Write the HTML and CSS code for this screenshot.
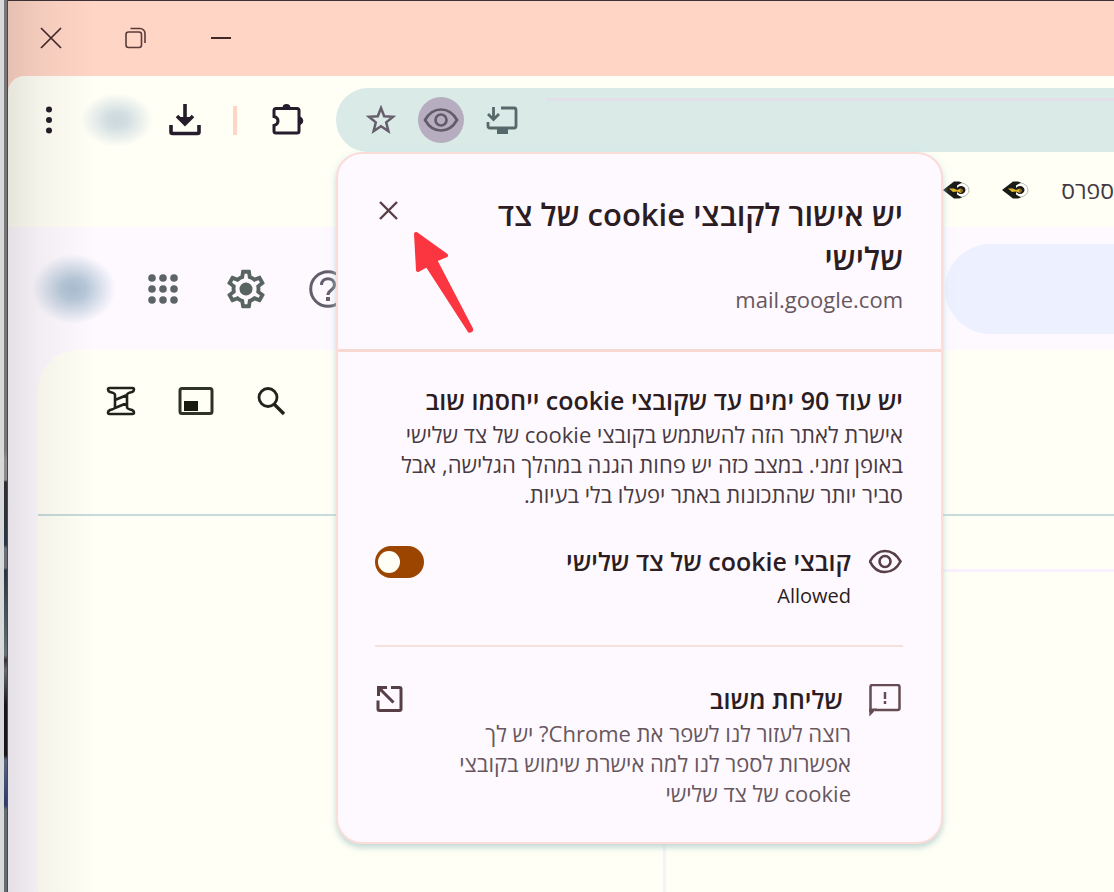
FILE: index.html
```html
<!DOCTYPE html>
<html lang="he">
<head>
<meta charset="utf-8">
<title>mail.google.com</title>
<link rel="stylesheet" href="styles.css">
</head>
<body>
<div class="desktop"></div>
<div class="window">
  <header class="titlebar">
    <button class="icon-btn" aria-label="Close window"><svg width="22" height="22" viewBox="0 0 22 22" fill="none" stroke="#43282a" stroke-width="1.7"><path d="M1 1l20 20M21 1L1 21"/></svg></button>
    <button class="icon-btn" aria-label="Restore window"><svg width="22" height="22" viewBox="0 0 22 22" fill="none" stroke="#5b3a3a" stroke-width="1.6"><rect x="1" y="5" width="15.500" height="15.500" rx="2.500"/><path d="M5.500 1.500h9.500a5 5 0 0 1 5 5V16" /></svg></button>
    <button class="icon-btn" aria-label="Minimize window"><svg width="22" height="22" viewBox="0 0 22 22" stroke="#43282a" stroke-width="2"><path d="M1 11h20"/></svg></button>
  </header>

  <div class="chrome">
    <div class="toolbar">
      <button class="icon-btn menu" aria-label="Menu"><svg width="8" height="30" viewBox="0 0 8 30" fill="#251d2c"><circle cx="4" cy="4.500" r="3"/><circle cx="4" cy="15" r="3"/><circle cx="4" cy="25.500" r="3"/></svg></button>
      <span class="blob-small"></span>
      <button class="icon-btn download" aria-label="Downloads"><svg width="32" height="32" viewBox="0 0 32 32" fill="none" stroke="#251d2c" stroke-width="3.600"><path d="M16 0v19M8 12l8 8 8-8"/><path d="M2 21v7q0 1.500 1.500 1.500h25q1.500 0 1.500-1.500v-7"/><path d="M9 13h14l-7 8z" fill="#251d2c" stroke="none"/></svg></button>
      <span class="separator"></span>
      <button class="icon-btn extensions" aria-label="Extensions"><svg width="32" height="32" viewBox="0 0 32 32"><path d="M4 4.500h21q2 0 2 2V27q0 2-2 2H4q-2 0-2-2v-5.500q4-1 4-4.500t-4-4.500v-6q0-2 2-2z" fill="none" stroke="#251d2c" stroke-width="3"/><path d="M10.500 4a4 4 0 0 1 8 0zM27 12.500a4 4 0 0 1 0 8.500z" fill="#251d2c"/></svg></button>
      <div class="address">
        <button class="icon-btn" aria-label="Bookmark"><svg width="30" height="30" viewBox="0 0 30 30" fill="none" stroke="#665f6b" stroke-width="2.500"><path d="M15 3l3.200 8.300 8.800.5-6.800 5.600 2.200 8.700L15 21.300l-7.400 4.800 2.200-8.700L3 11.800l8.800-.5z"/></svg></button>
        <button class="icon-btn eye-on" aria-label="Third-party cookies"><svg width="36" height="26" viewBox="0 0 36 26" fill="none" stroke="#625c69" stroke-width="2.700"><path d="M2 13Q8 2.500 18 2.500T34 13Q28 23.500 18 23.500T2 13z"/><circle cx="18" cy="13" r="5.500"/></svg></button>
        <button class="icon-btn" aria-label="Install"><svg width="32" height="30" viewBox="0 0 32 30" fill="none" stroke="#56686a" stroke-width="2.800"><path d="M15 3h13q2 0 2 2v16q0 2-2 2H4q-2 0-2-2v-4M7.500 2v12M2 9l5.500 5.500L13 9"/><path d="M11 26.500h11" stroke-width="5"/></svg></button>
        <input class="url" aria-label="Address">
      </div>
    </div>
    <nav class="bookmarks">
      <a href="#" aria-label="Bookmark"><svg width="28" height="20" viewBox="0 0 28 20"><ellipse cx="18" cy="10" rx="8" ry="7" fill="#fff" stroke="#b8bcb2"/><path d="M0 10L11 1.500h5l3 1-5 3v9l5 3-3 1h-5z" fill="#181b17"/><ellipse cx="18" cy="10" rx="4.500" ry="4" fill="#1d1a14"/><path d="M6 8.500h5l3 1.500 4-1.500 2 2-2 2.500-4-1.500-4 .5z" fill="#e3b62c"/><circle cx="18.500" cy="10.500" r="1.500" fill="#7d6a35"/></svg></a>
      <a href="#" aria-label="Bookmark"><svg width="28" height="20" viewBox="0 0 28 20"><ellipse cx="18" cy="10" rx="8" ry="7" fill="#fff" stroke="#b8bcb2"/><path d="M0 10L11 1.500h5l3 1-5 3v9l5 3-3 1h-5z" fill="#181b17"/><ellipse cx="18" cy="10" rx="4.500" ry="4" fill="#1d1a14"/><path d="M6 8.500h5l3 1.500 4-1.500 2 2-2 2.500-4-1.500-4 .5z" fill="#e3b62c"/><circle cx="18.500" cy="10.500" r="1.500" fill="#7d6a35"/></svg></a>
      <a href="#" class="bm-text" dir="rtl">ספרס</a>
    </nav>
  </div>

  <div class="mail-head">
    <span class="blob-large"></span>
    <button class="icon-btn" aria-label="Apps"><svg width="32" height="32" viewBox="0 0 32 32" fill="#5d6468"><circle cx="5" cy="5" r="3.800"/><circle cx="16" cy="5" r="3.800"/><circle cx="27" cy="5" r="3.800"/><circle cx="5" cy="16" r="3.800"/><circle cx="16" cy="16" r="3.800"/><circle cx="27" cy="16" r="3.800"/><circle cx="5" cy="27" r="3.800"/><circle cx="16" cy="27" r="3.800"/><circle cx="27" cy="27" r="3.800"/></svg></button>
    <button class="icon-btn gear" aria-label="Settings"><svg width="46" height="46" viewBox="0 0 24 24" fill="#58645f"><path d="M19.430 12.980c.04-.32.070-.64.070-.98s-.03-.66-.07-.98l2.110-1.650c.19-.15.24-.42.12-.64l-2-3.460c-.12-.22-.39-.3-.61-.22l-2.490 1c-.52-.4-1.080-.73-1.690-.98l-.38-2.650C14.460 2.180 14.250 2 14 2h-4c-.25 0-.46.18-.49.42l-.38 2.650c-.61.25-1.170.59-1.690.98l-2.490-1c-.23-.09-.49 0-.61.22l-2 3.460c-.13.22-.07.49.12.64l2.110 1.650c-.04.32-.07.65-.07.98s.03.66.07.98l-2.110 1.650c-.19.15-.24.42-.12.64l2 3.460c.12.22.39.3.61.22l2.490-1c.52.4 1.080.73 1.690.98l.38 2.650c.03.24.24.42.49.42h4c.25 0 .46-.18.49-.42l.38-2.650c.61-.25 1.170-.59 1.690-.98l2.490 1c.23.09.49 0 .61-.22l2-3.460c.12-.22.07-.49-.12-.64l-2.110-1.650zM17.450 11.270c.04.31.05.52.05.73s-.02.43-.05.73l-.14 1.130.89.7 1.080.84-.7 1.210-1.270-.51-1.040-.42-.9.68c-.43.32-.84.56-1.250.73l-1.060.43-.16 1.130-.2 1.350h-1.400l-.35-2.480-1.060-.43c-.43-.18-.83-.41-1.230-.71l-.91-.7-1.060.43-1.270.51-.7-1.210 1.970-1.540-.14-1.130c-.03-.31-.05-.54-.05-.74s.02-.43.05-.73l.14-1.130-1.970-1.540.7-1.210 2.310.93.900-.68c.43-.32.84-.56 1.250-.73l1.060-.43.360-2.480h1.390l.35 2.480 1.060.43c.43.18.83.41 1.230.71l.91.7 1.060-.43 1.270-.51.7 1.210-1.960 1.540.14 1.130z" fill-rule="evenodd"/><circle cx="12" cy="12" r="3.400"/></svg></button>
    <button class="icon-btn" aria-label="Help"><svg width="38" height="38" viewBox="0 0 38 38" fill="none" stroke="#625f6b" stroke-width="3"><circle cx="19" cy="19" r="17.300"/><path d="M12.500 15c0-8.500 13-8.500 13 0 0 5-6.500 5-6.500 10"/><path d="M17 29h4" stroke-width="4"/></svg></button>
    <input class="search" type="search" aria-label="Search mail">
  </div>

  <main class="mail">
    <div class="mail-tools">
      <button class="icon-btn" aria-label="Density"><svg width="30" height="30" viewBox="0 0 30 30" fill="none" stroke="#20231a" stroke-width="2.600" stroke-linejoin="round"><path d="M3.500 2h23q1.500 0 1.500 1.500T26 6q-5 1-5 3v12q0 2 5 3 2 1 2 2.500T26.500 28h-23Q2 28 2 26.500T4 24q5-1 5-3V9q0-2-5-3-2-1-2-2.500T3.500 2zM9 14l12-5M9 22l12-5"/></svg></button>
      <button class="icon-btn" aria-label="Layout"><svg width="36" height="30" viewBox="0 0 36 30"><rect x="2" y="2.500" width="32" height="25" rx="2" fill="none" stroke="#2f3226" stroke-width="3"/><path d="M6 15h14v10H6z" fill="#171a0f"/></svg></button>
      <button class="icon-btn" aria-label="Search"><svg width="30" height="30" viewBox="0 0 30 30" fill="none" stroke="#20231a" stroke-width="2.800"><circle cx="12" cy="11.500" r="9"/><path d="M18 18l10 10" stroke-width="3.400"/></svg></button>
    </div>
    <div class="mail-body">
      <div class="pane"></div>
      <div class="pane pane-end"></div>
    </div>
  </main>
  <div class="shade"></div>
</div>

<section class="popup" dir="rtl" role="dialog" aria-labelledby="popup-title">
  <div class="popup-head">
    <div class="head-text">
      <h1 id="popup-title">יש אישור לקובצי cookie של צד שלישי</h1>
      <p class="site">mail.google.com</p>
    </div>
    <button class="icon-btn" aria-label="סגירה"><svg width="28" height="28" viewBox="0 0 28 28" fill="none" stroke="#573f45" stroke-width="2.400"><path d="M6 6l17 17M23 6l-17 17"/></svg></button>
  </div>
  <div class="popup-body">
    <h2>יש עוד 90 ימים עד שקובצי cookie ייחסמו שוב</h2>
    <p class="desc">אישרת לאתר הזה להשתמש בקובצי cookie של צד שלישי באופן זמני. במצב כזה יש פחות הגנה במהלך הגלישה, אבל סביר יותר שהתכונות באתר יפעלו בלי בעיות.</p>
    <div class="row">
      <svg class="row-icon" width="34" height="30" viewBox="0 0 34 30" fill="none" stroke="#573f45" stroke-width="2.600"><path d="M1 15.500Q6.500 5 16 5T31.500 15.500Q26 26 16 26T1 15.500z"/><circle cx="16" cy="15.500" r="5.500"/></svg>
      <label class="row-text" for="cookies"><strong>קובצי cookie של צד שלישי</strong><span class="state" dir="ltr">Allowed</span></label>
      <input class="toggle" type="checkbox" role="switch" id="cookies" checked>
    </div>
    <hr>
    <a class="row feedback" href="#">
      <svg class="row-icon" width="34" height="34" viewBox="0 0 34 34" fill="none" stroke="#654b52" stroke-width="2.500"><path d="M1.500 28V3q0-2 2-2h25q2 0 2 2v21q0 2-2 2H6"/><path d="M.3 32.500v-8H8z" fill="#654b52" stroke="none"/><path d="M16 8v7M16 17v3"/></svg>
      <span class="row-text"><strong>שליחת משוב</strong><span class="desc muted">רוצה לעזור לנו לשפר את Chrome? יש לך אפשרות לספר לנו למה אישרת שימוש בקובצי cookie של צד שלישי</span></span>
      <svg class="open" width="28" height="28" viewBox="0 0 28 28" fill="none" stroke="#573f45" stroke-width="3"><path d="M12 3.500H3.500V12M4 4l14.500 14.500M16 3.500h8.500q1.500 0 1.500 1.500v20q0 1.500-1.500 1.500h-20q-1.500 0-1.500-1.500v-8.500"/><path d="M2 2h9l-9 9z" fill="#573f45" stroke="none"/></svg>
    </a>
  </div>
  <svg class="arrow" width="66" height="106" viewBox="0 0 66 106" fill="#fb3640" stroke="#fb3640" stroke-width="4" stroke-linejoin="round"><path d="M4 4l30 21.500-11 4.500 36 69a1 1 0 0 1-2 1L15 35l-9 5z"/></svg>
</section>
</body>
</html>
```

FILE: styles.css
```css
* { box-sizing: border-box; }

body {
  margin: 0;
  min-height: 100vh;
  display: flex;
  position: relative;
  overflow: hidden;
  font-family: "Open Sans", "Noto Sans", "Liberation Sans", sans-serif;
  background: #fffff5;
}

h1, h2, p { margin: 0; }

.icon-btn {
  display: flex;
  flex: none;
  padding: 0;
  border: 0;
  background: none;
}

svg { display: block; flex: none; }

.desktop {
  flex: none;
  width: 8px;
  border-left: 4px solid #d7d9db;
  border-right: 1px solid #4a4548;
  background: linear-gradient(#777 0, #777 450px, #8b8b8b 460px, #8b8b8b 480px, #303030 482px, #2c3644 545px, #686d78 548px, #686d78 568px, #293440 570px, #687078 655px, #333 660px, #656a70 670px, #161718 705px, #161718 755px, #59647e 760px, #2e3968 805px, #656b73 810px);
}

.window {
  flex: 1;
  min-width: 0;
  display: flex;
  flex-direction: column;
  position: relative;
  border-top: 1px solid #3a3234;
  background: #ffd5c5;
}

.titlebar {
  display: flex;
  align-items: center;
  gap: 63px;
  height: 75px;
  padding: 0 32px 2px;
}

.chrome {
  border-radius: 16px 0 0 0;
  background: #fffff5;
}

.toolbar {
  display: flex;
  align-items: center;
  padding: 12px 0 0 37px;
}

.blob-small {
  flex: none;
  width: 72px;
  height: 54px;
  margin: 0 16px 0 28px;
  background: radial-gradient(closest-side, #cbd8df 0, #d3dee2 30%, #fffff500 100%);
}

.separator {
  width: 4px;
  height: 29px;
  margin: 0 35px 0 32px;
  background: #ffd5c5;
}

.address {
  flex: 1;
  display: flex;
  align-items: center;
  gap: 22px;
  height: 64px;
  margin-left: 32px;
  padding-left: 30px;
  border-radius: 32px 0 0 32px;
  background: #daeae7;
}

.eye-on {
  width: 46px;
  height: 46px;
  align-items: center;
  justify-content: center;
  border-radius: 50%;
  background: #b6aec0;
}

.url {
  flex: 1;
  min-width: 0;
  height: 44px;
  margin-left: 6px;
  border: 0;
  border-top: 3px solid #e3dfed;
  background: none;
}

.bookmarks {
  display: flex;
  align-items: center;
  justify-content: flex-end;
  gap: 31px;
  height: 75px;
}

.bm-text {
  color: #423944;
  font-size: 23px;
  text-decoration: none;
}

.mail-head {
  display: flex;
  align-items: center;
  height: 123px;
  padding-left: 24px;
  background: #fef9ff;
}

.blob-large {
  flex: none;
  width: 84px;
  height: 70px;
  margin-right: 31px;
  background: radial-gradient(closest-side, #a9bfd2 0, #b7c8d9 30%, #fef9ff00 100%);
}

.gear { margin: 0 40px 0 44px; }

.search {
  flex: 1;
  min-width: 0;
  height: 90px;
  margin-left: 598px;
  border: 0;
  border-radius: 45px 0 0 45px;
  background: #edf1ff;
}

.mail {
  flex: 1;
  display: flex;
  flex-direction: column;
  background: linear-gradient(90deg, #fef9ff 50%, #fffff5 50%);
  padding-left: 30px;
}

.mail-tools {
  display: flex;
  align-items: center;
  gap: 42px;
  height: 166px;
  padding: 0 68px 62px;
  border-bottom: 2px solid #c8dad9;
  border-radius: 40px 0 0 0;
  background: #fffff5;
}

.mail-body {
  flex: 1;
  display: flex;
  background: #fffff5;
}

.pane { width: 628px; border-right: 3px solid #f8f0ff; }

.pane-end {
  flex: 1;
  margin-top: 53px;
  border-top: 3px solid #f8f0ff;
  border-right: 0;
}

.shade {
  position: absolute;
  inset: 0 auto 0 0;
  width: 88px;
  background: linear-gradient(90deg, #0000001a, #0000000c 35%, #00000000);
  pointer-events: none;
}

.popup {
  position: absolute;
  top: 152px;
  left: 336px;
  width: 607px;
  border: 2px solid #fbdcd9;
  border-radius: 26px;
  background: #fef9ff;
  box-shadow: 0 4px 5px #9ab5b566, 0 2px 10px #c8eeee88;
  color: #2b1d22;
}

.popup-head {
  display: flex;
  align-items: flex-start;
  justify-content: space-between;
  padding: 38px 38px 31px 36px;
  border-bottom: 3px solid #f7d9d2;
}

.popup-head .icon-btn { margin-top: 4px; }

.head-text { width: 420px; }

h1 {
  font-size: 31px;
  line-height: 44px;
  font-weight: 600;
}

.site {
  color: #67575d;
  font-size: 22px;
  line-height: 38px;
}

.popup-body { padding: 33px 38px 34px 37px; }

h2, strong {
  display: block;
  margin-bottom: 4px;
  font-size: 25px;
  line-height: 30px;
  font-weight: 600;
}

.desc {
  display: block;
  color: #483a40;
  font-size: 22px;
  line-height: 30px;
}

.muted { color: #67575d; }

.row {
  display: flex;
  align-items: flex-start;
  gap: 18px;
  margin-top: 37px;
  color: inherit;
  text-decoration: none;
}

.row-text { flex: 1; }

.row-text .desc { width: 410px; }

.feedback strong { padding-right: 8px; }

.state {
  display: block;
  font-size: 20px;
  line-height: 32px;
  text-align: right;
}

.toggle {
  appearance: none;
  display: flex;
  width: 49px;
  height: 32px;
  margin: 0;
  padding: 5px 3px;
  border-radius: 16px;
  background: #9c4500;
  direction: ltr;
}

.toggle::before {
  content: "";
  width: 22px;
  height: 22px;
  border-radius: 50%;
  background: #fffff5;
}

hr {
  height: 2px;
  margin: 33px 0 0;
  border: 0;
  background: #f7dfdc;
}

.arrow {
  position: absolute;
  top: 76px;
  left: 74px;
}
```
